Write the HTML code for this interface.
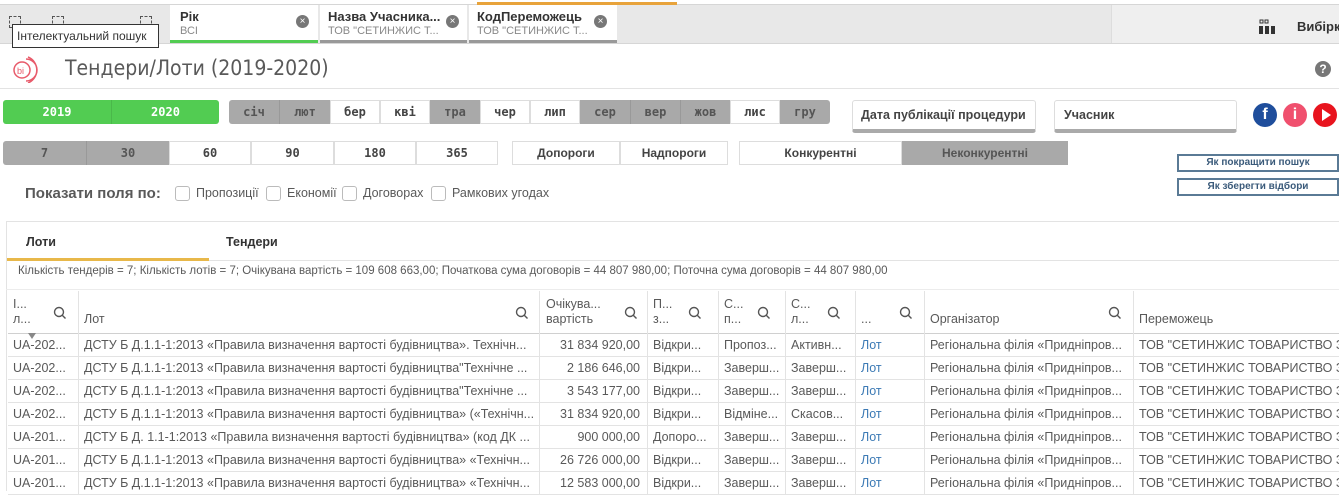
<!DOCTYPE html>
<html><head><meta charset="utf-8"><style>
*{box-sizing:border-box;margin:0;padding:0}
body{width:1339px;height:491px;overflow:hidden;background:#fff;font-family:"Liberation Sans","DejaVu Sans",sans-serif;color:#595959;position:relative}
.a{position:absolute}
.btn{position:absolute;display:flex;align-items:center;justify-content:center;font-size:12px;font-weight:bold;color:#444;font-family:"DejaVu Sans Mono","Liberation Mono",monospace}
.g{background:#a9a9a9;color:#555}
.gr{background:#52cc52;color:#fff}
.w{background:#fff;border:1px solid #ddd}
.row{position:absolute;left:8px;width:1331px;height:23px;border-bottom:1px solid #e3e3e3;font-size:12.5px;color:#595959}
.c{position:absolute;top:0;height:23px;line-height:22px;white-space:nowrap;overflow:hidden;padding-left:5px;border-left:1px solid #e3e3e3}
.srch{position:absolute;width:12px;height:12px}
</style></head><body>
<!-- top bar -->
<div class="a" style="left:0;top:4px;width:1339px;height:40px;background:#e8e8e8;border-top:1px solid #d6d6d6;border-bottom:1px solid #d6d6d6"></div>
<div class="a" style="left:477px;top:2px;width:200px;height:3px;background:#e8a33b"></div>
<div class="a" style="left:9px;top:16px;width:12px;height:12px;border:1px dashed #555"></div>
<div class="a" style="left:52px;top:16px;width:12px;height:12px;border:1px dashed #555"></div>
<div class="a" style="left:140px;top:16px;width:12px;height:12px;border:1px dashed #555"></div>
<div class="a" style="left:12px;top:24px;width:147px;height:24px;background:#fff;border:1px solid #333;font-size:12px;color:#333;line-height:22px;padding-left:4px">Інтелектуальний пошук</div>
<div class="a" style="left:170px;top:5px;width:148px;height:38px;background:#fff;border-bottom:3px solid #52cc52"></div>
<div class="a" style="left:320px;top:5px;width:147px;height:38px;background:#fff;border-bottom:3px solid #999"></div>
<div class="a" style="left:469px;top:5px;width:148px;height:38px;background:#fff;border-bottom:3px solid #999"></div>
<div class="a" style="left:180px;top:9px;font-size:13px;font-weight:bold;color:#333">Рік</div>
<div class="a" style="left:180px;top:25px;font-size:11px;color:#888">ВСІ</div>
<div class="a" style="left:328px;top:9px;font-size:13px;font-weight:bold;color:#333">Назва Учасника...</div>
<div class="a" style="left:328px;top:25px;font-size:11px;color:#888">ТОВ "СЕТИНЖИС Т...</div>
<div class="a" style="left:477px;top:9px;font-size:13px;font-weight:bold;color:#333">КодПереможець</div>
<div class="a" style="left:477px;top:25px;font-size:11px;color:#888">ТОВ "СЕТИНЖИС Т...</div>
<div class="a" style="left:296px;top:15px;width:13px;height:13px;border-radius:50%;background:#777;color:#fff;font-size:10px;line-height:13px;text-align:center">×</div>
<div class="a" style="left:446px;top:15px;width:13px;height:13px;border-radius:50%;background:#777;color:#fff;font-size:10px;line-height:13px;text-align:center">×</div>
<div class="a" style="left:594px;top:15px;width:13px;height:13px;border-radius:50%;background:#777;color:#fff;font-size:10px;line-height:13px;text-align:center">×</div>
<div class="a" style="left:1111px;top:5px;width:228px;height:38px;background:#efefef;border-left:1px solid #ddd"></div>
<svg class="a" style="left:1259px;top:19px" width="16" height="16"><rect x="1" y="1" width="3" height="3" fill="none" stroke="#333"/><rect x="6" y="1" width="3" height="3" fill="none" stroke="#333"/><rect x="0" y="7" width="4" height="8" fill="#333"/><rect x="6" y="7" width="4" height="8" fill="#333"/><rect x="12" y="7" width="4" height="8" fill="#333"/></svg>
<div class="a" style="left:1297px;top:19px;font-size:13px;font-weight:bold;color:#333">Вибірки</div>
<!-- title -->
<svg class="a" style="left:10px;top:55px" width="28" height="28"><circle cx="12" cy="15" r="8" fill="none" stroke="#e85a6a" stroke-width="1.5"/><path d="M16 4a11 11 0 0 1 0 22M18 2a14 14 0 0 1 0 26" fill="none" stroke="#e85a6a" stroke-width="1.5"/><text x="7" y="19" font-size="9" fill="#e85a6a" font-family="Liberation Sans">bi</text></svg>
<div class="a" style="left:65px;top:56px;font-size:21px;color:#595959;font-family:'DejaVu Sans Condensed','Liberation Sans',sans-serif">Тендери/Лоти (2019-2020)</div>
<div class="a" style="left:1315px;top:61px;width:16px;height:16px;border-radius:50%;background:#777;color:#fff;font-size:12px;font-weight:bold;text-align:center;line-height:16px">?</div>
<div class="a" style="left:0;top:88px;width:1339px;height:1px;background:#e3e3e3"></div>
<!-- years -->
<div class="btn gr" style="left:3px;top:100px;width:108px;height:24px;border-radius:3px 0 0 3px">2019</div>
<div class="btn gr" style="left:111px;top:100px;width:108px;height:24px;border-radius:0 3px 3px 0;border-left:1px solid #4ab84a">2020</div>
<div class="btn g" style="left:229px;top:100px;width:50px;height:24px;border-radius:3px 0 0 3px">січ</div>
<div class="btn g" style="left:279px;top:100px;width:51px;height:24px;border-left:1px solid #999">лют</div>
<div class="btn w" style="left:330px;top:100px;width:50px;height:24px">бер</div>
<div class="btn w" style="left:380px;top:100px;width:50px;height:24px">кві</div>
<div class="btn g" style="left:430px;top:100px;width:50px;height:24px">тра</div>
<div class="btn w" style="left:480px;top:100px;width:50px;height:24px">чер</div>
<div class="btn w" style="left:530px;top:100px;width:50px;height:24px">лип</div>
<div class="btn g" style="left:580px;top:100px;width:50px;height:24px">сер</div>
<div class="btn g" style="left:630px;top:100px;width:50px;height:24px;border-left:1px solid #999">вер</div>
<div class="btn g" style="left:680px;top:100px;width:50px;height:24px;border-left:1px solid #999">жов</div>
<div class="btn w" style="left:730px;top:100px;width:50px;height:24px">лис</div>
<div class="btn g" style="left:780px;top:100px;width:50px;height:24px;border-radius:0 3px 3px 0">гру</div>
<div class="a" style="left:852px;top:100px;width:184px;height:33px;border:1px solid #ddd;border-bottom:4px solid #aaa;border-radius:3px;font-size:12.5px;font-weight:bold;color:#444;padding:7px 0 0 8px">Дата публікації процедури</div>
<div class="a" style="left:1054px;top:100px;width:183px;height:33px;border:1px solid #ddd;border-bottom:4px solid #aaa;border-radius:3px;font-size:12.5px;font-weight:bold;color:#444;padding:7px 0 0 9px">Учасник</div>
<div class="a" style="left:1253px;top:103px;width:24px;height:24px;border-radius:50%;background:#1f4e9c;color:#fff;font-weight:bold;font-size:16px;text-align:center;line-height:24px">f</div>
<div class="a" style="left:1283px;top:103px;width:24px;height:24px;border-radius:50%;background:#f0506e;color:#fff;font-weight:bold;font-size:16px;text-align:center;line-height:24px">i</div>
<div class="a" style="left:1313px;top:103px;width:24px;height:24px;border-radius:50%;background:#e8141e"></div>
<div class="a" style="left:1322px;top:109px;width:0;height:0;border-left:9px solid #fff;border-top:6px solid transparent;border-bottom:6px solid transparent"></div>
<!-- row 2 -->
<div class="btn g" style="left:3px;top:141px;width:83px;height:24px;border-radius:3px 0 0 3px">7</div>
<div class="btn g" style="left:86px;top:141px;width:83px;height:24px;border-left:1px solid #999">30</div>
<div class="btn w" style="left:169px;top:141px;width:82px;height:24px">60</div>
<div class="btn w" style="left:251px;top:141px;width:83px;height:24px">90</div>
<div class="btn w" style="left:334px;top:141px;width:82px;height:24px">180</div>
<div class="btn w" style="left:416px;top:141px;width:82px;height:24px">365</div>
<div class="btn w" style="left:512px;top:141px;width:108px;height:24px;font-family:'Liberation Sans',sans-serif">Допороги</div>
<div class="btn w" style="left:620px;top:141px;width:108px;height:24px;font-family:'Liberation Sans',sans-serif">Надпороги</div>
<div class="btn w" style="left:739px;top:141px;width:163px;height:24px;font-family:'Liberation Sans',sans-serif">Конкурентні</div>
<div class="btn g" style="left:902px;top:141px;width:166px;height:24px;font-family:'Liberation Sans',sans-serif">Неконкурентні</div>
<div class="a" style="left:1177px;top:154px;width:162px;height:18px;border:2px solid #5a7a95;font-size:10px;font-weight:bold;color:#3a5a7a;text-align:center;line-height:14px">Як покращити пошук</div>
<div class="a" style="left:1177px;top:178px;width:162px;height:18px;border:2px solid #5a7a95;font-size:10px;font-weight:bold;color:#3a5a7a;text-align:center;line-height:14px">Як зберегти відбори</div>
<!-- checkboxes -->
<div class="a" style="left:25px;top:185px;font-size:15px;font-weight:bold;color:#595959">Показати поля по:</div>
<div class="a" style="left:175px;top:186px;width:15px;height:15px;border:1px solid #bbb;border-radius:3px"></div>
<div class="a" style="left:196px;top:186px;font-size:12.5px">Пропозиції</div>
<div class="a" style="left:266px;top:186px;width:15px;height:15px;border:1px solid #bbb;border-radius:3px"></div>
<div class="a" style="left:287px;top:186px;font-size:12.5px">Економії</div>
<div class="a" style="left:342px;top:186px;width:15px;height:15px;border:1px solid #bbb;border-radius:3px"></div>
<div class="a" style="left:363px;top:186px;font-size:12.5px">Договорах</div>
<div class="a" style="left:431px;top:186px;width:15px;height:15px;border:1px solid #bbb;border-radius:3px"></div>
<div class="a" style="left:452px;top:186px;font-size:12.5px">Рамкових угодах</div>
<!-- tabs -->
<div class="a" style="left:6px;top:221px;width:1333px;height:1px;background:#e3e3e3"></div>
<div class="a" style="left:6px;top:221px;width:1px;height:270px;background:#e3e3e3"></div>
<div class="a" style="left:26px;top:235px;font-size:12.5px;font-weight:bold;color:#333">Лоти</div>
<div class="a" style="left:226px;top:235px;font-size:12.5px;font-weight:bold;color:#333">Тендери</div>
<div class="a" style="left:7px;top:258px;width:202px;height:3px;background:#e8b84a"></div>
<div class="a" style="left:209px;top:260px;width:1130px;height:1px;background:#e3e3e3"></div>
<div class="a" style="left:18px;top:265px;font-size:11.5px;color:#595959;white-space:nowrap">Кількість тендерів = 7; Кількість лотів = 7; Очікувана вартість = 109 608 663,00; Початкова сума договорів = 44 807 980,00; Поточна сума договорів = 44 807 980,00</div>
<div class="a" style="left:6px;top:289px;width:1333px;height:1px;background:#ececec"></div>
<!-- header -->
<div class="row" style="top:291px;height:43px;border-bottom:1px solid #d0d0d0;font-size:12.5px">
<div class="c" style="left:0;width:70px;height:43px;border-left:none;line-height:15px;padding-top:6px">І...<br>л...</div>
<div class="c" style="left:70px;width:461px;height:43px;line-height:15px;padding-top:21px">Лот</div>
<div class="c" style="left:531px;width:108px;height:43px;line-height:15px;padding-top:6px;padding-left:6px">Очікува...<br>вартість</div>
<div class="c" style="left:639px;width:71px;height:43px;line-height:15px;padding-top:6px">П...<br>з...</div>
<div class="c" style="left:710px;width:67px;height:43px;line-height:15px;padding-top:6px">С...<br>п...</div>
<div class="c" style="left:777px;width:70px;height:43px;line-height:15px;padding-top:6px">С...<br>л...</div>
<div class="c" style="left:847px;width:69px;height:43px;line-height:15px;padding-top:21px">...</div>
<div class="c" style="left:916px;width:209px;height:43px;line-height:15px;padding-top:21px">Організатор</div>
<div class="c" style="left:1125px;width:206px;height:43px;line-height:15px;padding-top:21px">Переможець</div>
</div>
<svg class="a" style="left:0;top:0" width="1339" height="491"><g fill="none" stroke="#555" stroke-width="1.4">
<circle cx="59" cy="312" r="4.5"/><path d="M62 315l3.5 3.5"/>
<circle cx="521" cy="312" r="4.5"/><path d="M524 315l3.5 3.5"/>
<circle cx="630" cy="312" r="4.5"/><path d="M633 315l3.5 3.5"/>
<circle cx="694" cy="312" r="4.5"/><path d="M697 315l3.5 3.5"/>
<circle cx="763" cy="312" r="4.5"/><path d="M766 315l3.5 3.5"/>
<circle cx="833" cy="312" r="4.5"/><path d="M836 315l3.5 3.5"/>
<circle cx="905" cy="312" r="4.5"/><path d="M908 315l3.5 3.5"/>
<circle cx="1114" cy="312" r="4.5"/><path d="M1117 315l3.5 3.5"/>
</g><path d="M28 333l4 6 4-6z" fill="#888"/></svg>
<!-- rows -->
<div class="row" style="top:334px"><div class="c" style="left:0;width:70px;border-left:none">UA-202...</div><div class="c" style="left:70px;width:461px">ДСТУ Б Д.1.1-1:2013 «Правила визначення вартості будівництва». Технічн...</div><div class="c" style="left:531px;width:108px;text-align:right;padding-right:7px">31 834 920,00</div><div class="c" style="left:639px;width:71px">Відкри...</div><div class="c" style="left:710px;width:67px">Пропоз...</div><div class="c" style="left:777px;width:70px">Активн...</div><div class="c" style="left:847px;width:69px;color:#3c7ab5">Лот</div><div class="c" style="left:916px;width:209px">Регіональна філія «Придніпров...</div><div class="c" style="left:1125px;width:206px">ТОВ "СЕТИНЖИС ТОВАРИСТВО З</div></div>
<div class="row" style="top:357px"><div class="c" style="left:0;width:70px;border-left:none">UA-202...</div><div class="c" style="left:70px;width:461px">ДСТУ Б Д.1.1-1:2013 «Правила визначення вартості будівництва"Технічне ...</div><div class="c" style="left:531px;width:108px;text-align:right;padding-right:7px">2 186 646,00</div><div class="c" style="left:639px;width:71px">Відкри...</div><div class="c" style="left:710px;width:67px">Заверш...</div><div class="c" style="left:777px;width:70px">Заверш...</div><div class="c" style="left:847px;width:69px;color:#3c7ab5">Лот</div><div class="c" style="left:916px;width:209px">Регіональна філія «Придніпров...</div><div class="c" style="left:1125px;width:206px">ТОВ "СЕТИНЖИС ТОВАРИСТВО З</div></div>
<div class="row" style="top:380px"><div class="c" style="left:0;width:70px;border-left:none">UA-202...</div><div class="c" style="left:70px;width:461px">ДСТУ Б Д.1.1-1:2013 «Правила визначення вартості будівництва"Технічне ...</div><div class="c" style="left:531px;width:108px;text-align:right;padding-right:7px">3 543 177,00</div><div class="c" style="left:639px;width:71px">Відкри...</div><div class="c" style="left:710px;width:67px">Заверш...</div><div class="c" style="left:777px;width:70px">Заверш...</div><div class="c" style="left:847px;width:69px;color:#3c7ab5">Лот</div><div class="c" style="left:916px;width:209px">Регіональна філія «Придніпров...</div><div class="c" style="left:1125px;width:206px">ТОВ "СЕТИНЖИС ТОВАРИСТВО З</div></div>
<div class="row" style="top:403px"><div class="c" style="left:0;width:70px;border-left:none">UA-202...</div><div class="c" style="left:70px;width:461px">ДСТУ Б Д.1.1-1:2013 «Правила визначення вартості будівництва» («Технічн...</div><div class="c" style="left:531px;width:108px;text-align:right;padding-right:7px">31 834 920,00</div><div class="c" style="left:639px;width:71px">Відкри...</div><div class="c" style="left:710px;width:67px">Відміне...</div><div class="c" style="left:777px;width:70px">Скасов...</div><div class="c" style="left:847px;width:69px;color:#3c7ab5">Лот</div><div class="c" style="left:916px;width:209px">Регіональна філія «Придніпров...</div><div class="c" style="left:1125px;width:206px">ТОВ "СЕТИНЖИС ТОВАРИСТВО З</div></div>
<div class="row" style="top:426px"><div class="c" style="left:0;width:70px;border-left:none">UA-201...</div><div class="c" style="left:70px;width:461px">ДСТУ Б Д. 1.1-1:2013 «Правила визначення вартості будівництва» (код ДК ...</div><div class="c" style="left:531px;width:108px;text-align:right;padding-right:7px">900 000,00</div><div class="c" style="left:639px;width:71px">Допоро...</div><div class="c" style="left:710px;width:67px">Заверш...</div><div class="c" style="left:777px;width:70px">Заверш...</div><div class="c" style="left:847px;width:69px;color:#3c7ab5">Лот</div><div class="c" style="left:916px;width:209px">Регіональна філія «Придніпров...</div><div class="c" style="left:1125px;width:206px">ТОВ "СЕТИНЖИС ТОВАРИСТВО З</div></div>
<div class="row" style="top:449px"><div class="c" style="left:0;width:70px;border-left:none">UA-201...</div><div class="c" style="left:70px;width:461px">ДСТУ Б Д.1.1-1:2013 «Правила визначення вартості будівництва» «Технічн...</div><div class="c" style="left:531px;width:108px;text-align:right;padding-right:7px">26 726 000,00</div><div class="c" style="left:639px;width:71px">Відкри...</div><div class="c" style="left:710px;width:67px">Заверш...</div><div class="c" style="left:777px;width:70px">Заверш...</div><div class="c" style="left:847px;width:69px;color:#3c7ab5">Лот</div><div class="c" style="left:916px;width:209px">Регіональна філія «Придніпров...</div><div class="c" style="left:1125px;width:206px">ТОВ "СЕТИНЖИС ТОВАРИСТВО З</div></div>
<div class="row" style="top:472px"><div class="c" style="left:0;width:70px;border-left:none">UA-201...</div><div class="c" style="left:70px;width:461px">ДСТУ Б Д.1.1-1:2013 «Правила визначення вартості будівництва» «Технічн...</div><div class="c" style="left:531px;width:108px;text-align:right;padding-right:7px">12 583 000,00</div><div class="c" style="left:639px;width:71px">Відкри...</div><div class="c" style="left:710px;width:67px">Заверш...</div><div class="c" style="left:777px;width:70px">Заверш...</div><div class="c" style="left:847px;width:69px;color:#3c7ab5">Лот</div><div class="c" style="left:916px;width:209px">Регіональна філія «Придніпров...</div><div class="c" style="left:1125px;width:206px">ТОВ "СЕТИНЖИС ТОВАРИСТВО З</div></div>
</body></html>
